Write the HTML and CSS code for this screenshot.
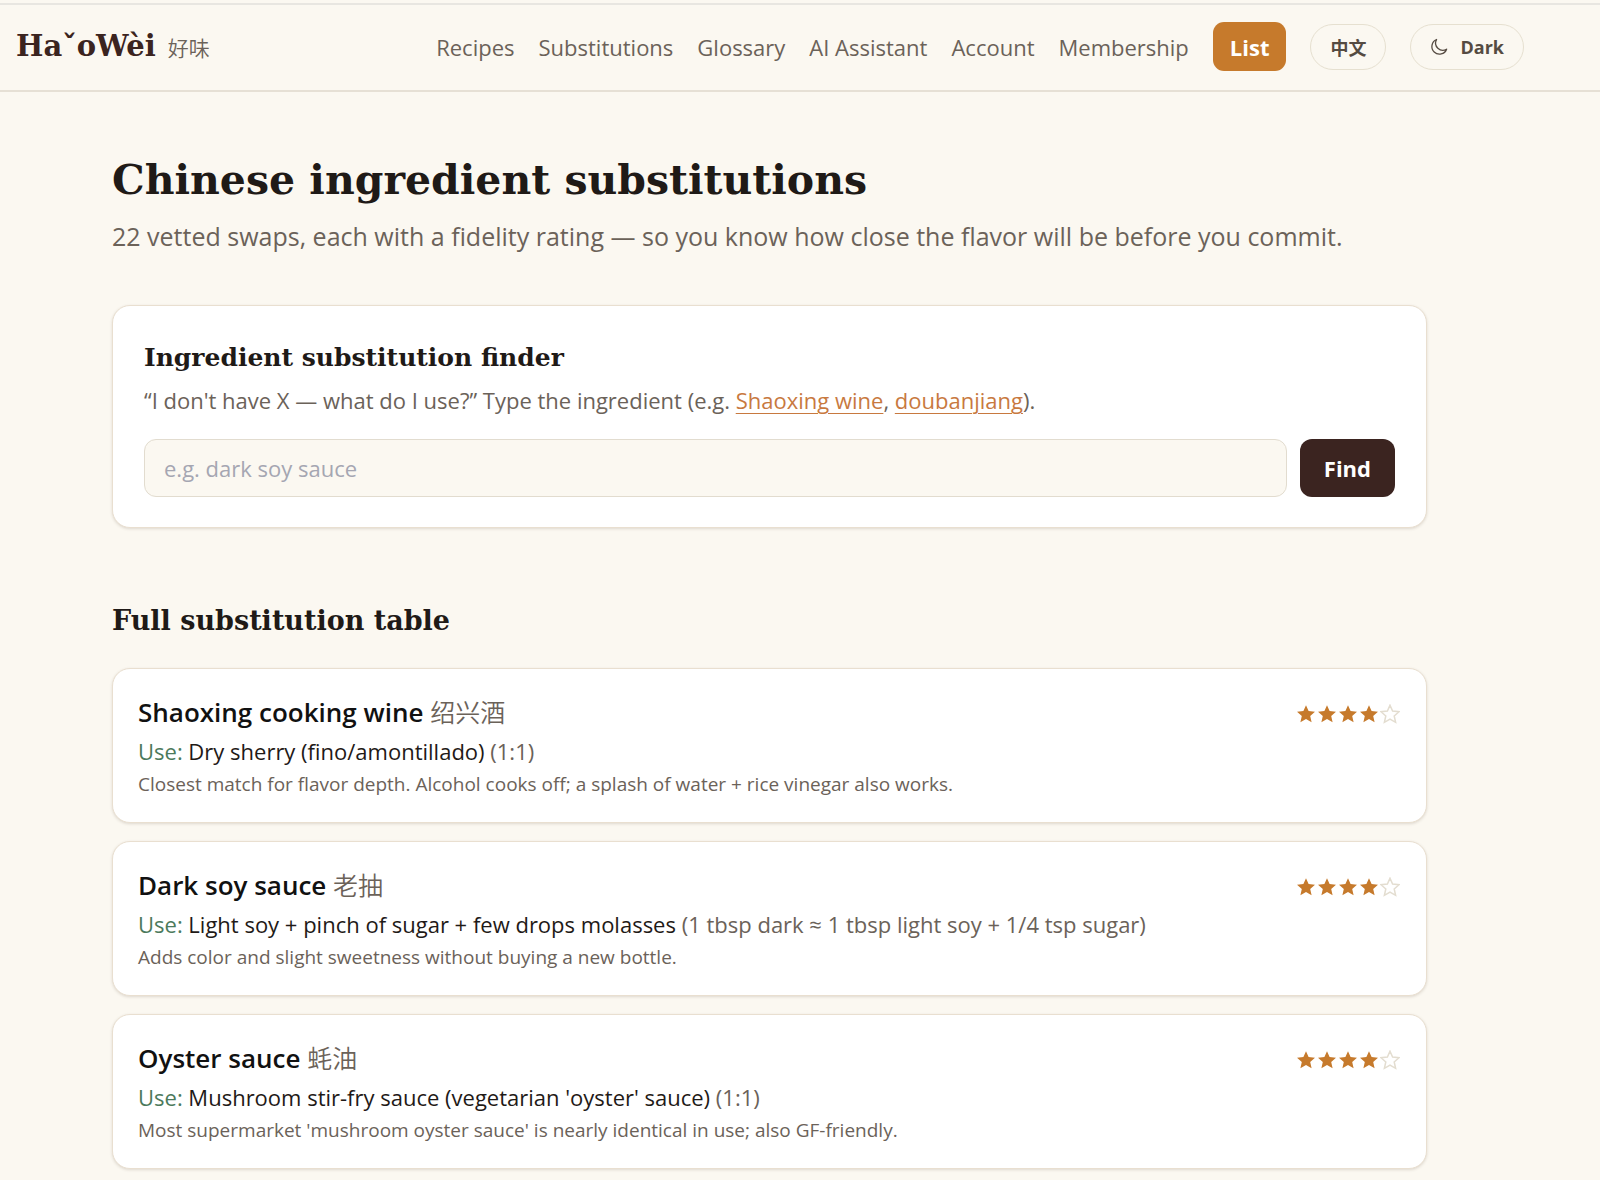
FILE: index.html
```html
<!DOCTYPE html>
<html lang="en">

<head>
    <meta charset="UTF-8">
    <meta name="viewport" content="width=device-width, initial-scale=1.0">
    <title>Chinese ingredient substitutions</title>
    <link rel="stylesheet" href="styles.css">
</head>

<body>
    <svg class="sprite" aria-hidden="true">
        <symbol id="star" viewBox="0 0 20 20">
            <path d="M10 1.2l2.6 5.9 6.4.6-4.8 4.3 1.4 6.3-5.6-3.3-5.6 3.3 1.4-6.3L1 7.7l6.4-.6z" />
        </symbol>
    </svg>

    <header class="header">
        <a class="brand" href="#">HaˇoWèi <small lang="zh">好味</small></a>
        <nav class="nav">
            <a href="#">Recipes</a>
            <a href="#">Substitutions</a>
            <a href="#">Glossary</a>
            <a href="#">AI Assistant</a>
            <a href="#">Account</a>
            <a href="#">Membership</a>
            <a class="nav-list" href="#">List</a>
            <button class="pill" type="button" lang="zh">中文</button>
            <button class="pill" type="button">
                <svg class="moon" viewBox="0 0 18 18" aria-hidden="true">
                    <path d="M6.6 1.5A7.6 7.6 0 1 0 16.6 11.2 7.2 7.2 0 0 1 6.6 1.5z" />
                </svg>
                Dark
            </button>
        </nav>
    </header>

    <main class="main">
        <h1>Chinese ingredient substitutions</h1>
        <p class="lead">22 vetted swaps, each with a fidelity rating — so you know how close the flavor will be before you commit.</p>

        <section class="card finder">
            <h2>Ingredient substitution finder</h2>
            <p><label for="ingredient">“I don't have X — what do I use?” Type the ingredient</label> (e.g. <a href="#">Shaoxing wine</a>, <a href="#">doubanjiang</a>).</p>
            <form class="finder-form">
                <input type="text" id="ingredient" placeholder="e.g. dark soy sauce">
                <button type="submit">Find</button>
            </form>
        </section>

        <h2 class="table-title">Full substitution table</h2>
        <div class="subs">
            <article class="card sub">
                <div class="sub-head">
                    <h3>Shaoxing cooking wine <span lang="zh">绍兴酒</span></h3>
                    <div class="stars" role="img" aria-label="4 out of 5">
                        <svg><use href="#star" /></svg>
                        <svg><use href="#star" /></svg>
                        <svg><use href="#star" /></svg>
                        <svg><use href="#star" /></svg>
                        <svg class="empty"><use href="#star" /></svg>
                    </div>
                </div>
                <p class="use"><span class="use-label">Use:</span> Dry sherry (fino/amontillado) <span class="ratio">(1:1)</span></p>
                <p class="note">Closest match for flavor depth. Alcohol cooks off; a splash of water + rice vinegar also works.</p>
            </article>

            <article class="card sub">
                <div class="sub-head">
                    <h3>Dark soy sauce <span lang="zh">老抽</span></h3>
                    <div class="stars" role="img" aria-label="4 out of 5">
                        <svg><use href="#star" /></svg>
                        <svg><use href="#star" /></svg>
                        <svg><use href="#star" /></svg>
                        <svg><use href="#star" /></svg>
                        <svg class="empty"><use href="#star" /></svg>
                    </div>
                </div>
                <p class="use"><span class="use-label">Use:</span> Light soy + pinch of sugar + few drops molasses <span class="ratio">(1 tbsp dark ≈ 1 tbsp light soy + 1/4 tsp sugar)</span></p>
                <p class="note">Adds color and slight sweetness without buying a new bottle.</p>
            </article>

            <article class="card sub">
                <div class="sub-head">
                    <h3>Oyster sauce <span lang="zh">蚝油</span></h3>
                    <div class="stars" role="img" aria-label="4 out of 5">
                        <svg><use href="#star" /></svg>
                        <svg><use href="#star" /></svg>
                        <svg><use href="#star" /></svg>
                        <svg><use href="#star" /></svg>
                        <svg class="empty"><use href="#star" /></svg>
                    </div>
                </div>
                <p class="use"><span class="use-label">Use:</span> Mushroom stir-fry sauce (vegetarian 'oyster' sauce) <span class="ratio">(1:1)</span></p>
                <p class="note">Most supermarket 'mushroom oyster sauce' is nearly identical in use; also GF-friendly.</p>
            </article>
        </div>
    </main>
</body>

</html>
```
FILE: styles.css
```css
* {
    box-sizing: border-box;
}

html {
    background: #fff;
}

body {
    margin: 0;
    background: #fbf8f1;
    color: #1f1a17;
    font-family: "Open Sans", "Noto Sans CJK SC", sans-serif;
    font-size: 22px;
    line-height: 32px;
}

h1,
h2,
h3,
p {
    margin: 0;
}

h1,
h2,
.brand {
    font-family: "DejaVu Serif", "Noto Sans CJK SC", serif;
    font-weight: bold;
}

.sprite {
    display: none;
}

/* header */
.header {
    display: flex;
    justify-content: space-between;
    align-items: center;
    margin-top: 3px;
    height: 89px;
    padding: 0 76px 2px 16px;
    border-top: 2px solid #e8e6e1;
    border-bottom: 2px solid #e6e0d5;
}

.brand {
    color: #3b2420;
    font-size: 29px;
    text-decoration: none;
}

.brand small {
    color: #6b6259;
    font-family: "Noto Sans CJK SC", sans-serif;
    font-size: 21px;
    font-weight: 350;
    margin-left: 2px;
}

.nav {
    display: flex;
    align-items: center;
    gap: 24px;
}

.nav a {
    color: #6b6259;
    text-decoration: none;
}

.nav .nav-list {
    padding: 9px 17px 8px;
    border-radius: 11px;
    background: #c67a2c;
    color: #fff;
    font-weight: bold;
}

.pill {
    display: flex;
    align-items: center;
    gap: 12px;
    height: 46px;
    padding: 0 19px;
    border: 1px solid #e6e0d0;
    border-radius: 23px;
    background: transparent;
    color: #554b42;
    font-family: inherit;
    font-size: 18px;
    font-weight: bold;
}

.moon {
    width: 18px;
    height: 18px;
    fill: none;
    stroke: #554b42;
    stroke-width: 1.3;
    stroke-linejoin: round;
}

/* page */
.main {
    padding: 56px 173px 40px 112px;
}

h1 {
    font-size: 41px;
    line-height: 64px;
}

.lead {
    margin-top: 4px;
    color: #6b6259;
    font-size: 25px;
    line-height: 40px;
}

.card {
    border: 1px solid #e9dfd0;
    border-radius: 18px;
    background: #fff;
    box-shadow: 0 1px 3px rgba(60, 40, 20, 0.15);
}

h2 {
    font-size: 25px;
    line-height: 40px;
}

.finder {
    margin-top: 49px;
    padding: 32px 31px 30px;
}

.finder p {
    margin-top: 6px;
    color: #6b6259;
}

.finder p a {
    color: #c8793f;
    text-decoration-thickness: 1px;
    text-underline-offset: 4px;
}

.finder-form {
    display: flex;
    gap: 13px;
    margin-top: 23px;
}

.finder-form input {
    flex: 1;
    min-width: 0;
    height: 58px;
    padding: 0 19px;
    border: 1px solid #e2dccf;
    border-radius: 12px;
    background: #fbf8f1;
    font: inherit;
}

.finder-form input::placeholder {
    color: #a5a6b2;
}

.finder-form button {
    padding: 0 24px;
    border: none;
    border-radius: 12px;
    background: #3b2420;
    color: #fff;
    font: inherit;
    font-weight: bold;
}

.table-title {
    margin-top: 73px;
    font-size: 27px;
}

.subs {
    display: grid;
    gap: 18px;
    margin-top: 27px;
}

.sub {
    padding: 25px 25px 24px;
}

.sub-head {
    display: flex;
    justify-content: space-between;
    align-items: center;
}

h3 {
    color: #111;
    font-size: 26px;
    font-weight: 600;
    line-height: 36px;
}

h3 span {
    color: #6b6259;
    font-size: 25px;
    font-weight: 350;
}

.stars {
    display: flex;
    gap: 1px;
    margin: 4px 1px 0 0;
}

.stars svg {
    width: 20px;
    height: 20px;
    fill: #c67a2c;
}

.stars .empty {
    fill: none;
    stroke: #e3ddd0;
    stroke-width: 1.5;
}

.use {
    margin-top: 5px;
}

.use-label {
    color: #4c7a5c;
}

.ratio,
.note {
    color: #6b6259;
}

.note {
    margin-top: 3px;
    font-size: 19px;
    line-height: 28px;
}
```
